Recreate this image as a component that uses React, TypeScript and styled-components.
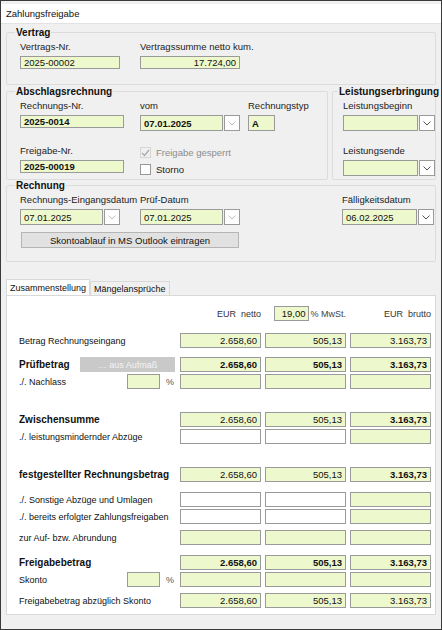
import styled, { createGlobalStyle } from 'styled-components';

const Global = createGlobalStyle`
  body { margin: 0; font-family: 'Liberation Sans', Arial, sans-serif; font-size: 9.5px; color: #111; }
`;

const Win = styled.div`
  width: 442px;
  height: 630px;
  box-sizing: border-box;
  border: 1px solid #3a3a3a;
  background: #f0f0f0;
  display: flex;
  flex-direction: column;
  overflow: hidden;
`;

const TitleBar = styled.div`
  height: 19px;
  margin-top: 3px;
  background: #fff;
  border-bottom: 1px solid #e2e2e2;
  padding-left: 5px;
  display: flex;
  align-items: center;
  font-size: 9.5px;
`;

const Group = styled.fieldset<{ $w?: number; $h: number }>`
  margin: 0;
  padding: 3px 0 0 13px;
  width: ${(p) => (p.$w ? `${p.$w}px` : 'auto')};
  height: ${(p) => p.$h}px;
  box-sizing: border-box;
  border: 1px solid #dcdcdc;
  border-radius: 2px;
  min-width: 0;
`;

const Legend = styled.legend`
  font-weight: bold;
  font-size: 10px;
  padding: 0 1px;
  margin-left: -5px;
  white-space: nowrap;
`;

const GroupRow = styled.div<{ $top?: number }>`
  display: flex;
  gap: 4px;
  margin: 0 5px;
  margin-top: ${(p) => p.$top ?? 0}px;
`;

const FieldRow = styled.div<{ $top?: number }>`
  display: flex;
  align-items: flex-start;
  margin-top: ${(p) => p.$top ?? 0}px;
`;

const Field = styled.div<{ $w: number; $mr?: number }>`
  width: ${(p) => p.$w}px;
  margin-right: ${(p) => p.$mr ?? 0}px;
  display: flex;
  flex-direction: column;
  gap: 3px;
`;

const Label = styled.span`
  font-size: 9.5px;
  color: #222;
  white-space: nowrap;
  height: 12px;
`;

const Input = styled.div<{ $bold?: boolean; $right?: boolean; $white?: boolean; $w?: number }>`
  height: 16px;
  ${(p) => (p.$w ? `width: ${p.$w}px;` : 'flex: 1;')}
  box-sizing: border-box;
  border: 1px solid #9a9a9a;
  background: ${(p) => (p.$white ? '#fff' : '#edf8cd')};
  font-weight: ${(p) => (p.$bold ? 'bold' : 'normal')};
  display: flex;
  align-items: center;
  justify-content: ${(p) => (p.$right ? 'flex-end' : 'flex-start')};
  padding: 0 3px;
  font-size: 9.5px;
  white-space: nowrap;
`;

const Combo = styled.div`
  display: flex;
  gap: 1px;
`;

const Drop = styled.div<{ $dim?: boolean }>`
  width: 16px;
  height: 16px;
  box-sizing: border-box;
  border: 1px solid #9a9a9a;
  background: #fff;
  display: flex;
  align-items: center;
  justify-content: center;
  color: ${(p) => (p.$dim ? '#bbb' : '#555')};
`;

const Chevron = () => (
  <svg width="8" height="5" viewBox="0 0 8 5">
    <path d="M0.5 0.5 L4 4 L7.5 0.5" fill="none" stroke="currentColor" strokeWidth="1" />
  </svg>
);

const DateBox = ({ value, dim, bold }: { value: string; dim?: boolean; bold?: boolean }) => (
  <Combo>
    <Input $bold={bold}>{value}</Input>
    <Drop $dim={dim}>
      <Chevron />
    </Drop>
  </Combo>
);

const Checks = styled.div`
  display: flex;
  flex-direction: column;
  gap: 2px;
  margin-top: 0px;
`;

const Check = styled.div<{ $dim?: boolean }>`
  display: flex;
  align-items: center;
  gap: 5px;
  height: 15px;
  color: ${(p) => (p.$dim ? '#8c8c8c' : '#222')};
`;

const Box = styled.div<{ $dim?: boolean }>`
  width: 11px;
  height: 11px;
  box-sizing: border-box;
  border: 1px solid ${(p) => (p.$dim ? '#d6d6d6' : '#999')};
  background: ${(p) => (p.$dim ? '#f0f0f0' : '#fff')};
  display: flex;
  align-items: center;
  justify-content: center;
`;

const Button = styled.div`
  margin-top: 7px;
  width: 218px;
  height: 16px;
  box-sizing: border-box;
  border: 1px solid #b5b5b5;
  background: #e1e1e1;
  display: flex;
  align-items: center;
  justify-content: center;
  margin-left: 1px;
`;

const Tabs = styled.div`
  display: flex;
  margin: 17px 5px 0;
`;

const Tab = styled.div<{ $on?: boolean }>`
  padding: 0 3px;
  height: ${(p) => (p.$on ? 15 : 13)}px;
  margin-top: ${(p) => (p.$on ? 0 : 2)}px;
  display: flex;
  align-items: center;
  background: ${(p) => (p.$on ? '#fff' : '#f0f0f0')};
  border: 1px solid #d9d9d9;
  border-bottom: none;
  font-size: 9px;
`;

const Panel = styled.div`
  margin: 0 5px;
  height: 320px;
  background: #fff;
  border: 1px solid #d9d9d9;
  padding: 10px 0 0 12px;
  box-sizing: border-box;
`;

const Row = styled.div<{ $top?: number }>`
  display: grid;
  grid-template-columns: 157px 81px 81px 81px;
  column-gap: 4px;
  height: 15px;
  align-items: center;
  margin-top: ${(p) => p.$top ?? 2}px;
`;

const RowLabel = styled.div<{ $bold?: boolean }>`
  display: flex;
  align-items: center;
  gap: 6px;
  font-weight: ${(p) => (p.$bold ? 'bold' : 'normal')};
  font-size: ${(p) => (p.$bold ? 10 : 9)}px;
  white-space: nowrap;
  height: 15px;
`;

const Cell = styled(Input)`
  height: 15px;
`;

const Head = styled.div`
  text-align: right;
  color: #333;
  white-space: nowrap;
  font-size: 9px;
`;

const GrayBtn = styled.div`
  margin-left: auto;
  width: 95px;
  height: 15px;
  background: #c9c9c9;
  color: #f4f4f4;
  font-weight: normal;
  font-size: 9px;
  display: flex;
  align-items: center;
  justify-content: center;
  margin-right: 1px;
`;

const SmallIn = styled(Input)`
  margin-left: auto;
  height: 15px;
`;

const Pct = styled.span`
  color: #555;
  width: 10px;
`;

type C = { v?: string; w?: boolean; b?: boolean };

const Cells = ({ cells }: { cells: C[] }) => (
  <>
    {cells.map((c, i) => (
      <Cell key={i} $right $white={c.w} $bold={c.b}>
        {c.v ?? ''}
      </Cell>
    ))}
  </>
);

const vals = (b1: boolean, b2: boolean, b3: boolean): C[] => [
  { v: '2.658,60', b: b1 },
  { v: '505,13', b: b2 },
  { v: '3.163,73', b: b3 },
];

const App = () => (
  <Win>
    <Global />
    <TitleBar>Zahlungsfreigabe</TitleBar>
    <GroupRow $top={3}>
      <Group $h={58} style={{ flex: 1 }}>
        <Legend>Vertrag</Legend>
        <FieldRow>
          <Field $w={100} $mr={20}>
            <Label>Vertrags-Nr.</Label>
            <Input>2025-00002</Input>
          </Field>
          <Field $w={100}>
            <Label>Vertragssumme netto kum.</Label>
            <Input $right>17.724,00</Input>
          </Field>
        </FieldRow>
      </Group>
    </GroupRow>
    <GroupRow $top={1}>
      <Group $w={322} $h={94}>
        <Legend>Abschlagsrechnung</Legend>
        <FieldRow>
          <Field $w={104} $mr={16}>
            <Label>Rechnungs-Nr.</Label>
            <Input $bold>2025-0014</Input>
          </Field>
          <Field $w={100} $mr={8}>
            <Label>vom</Label>
            <DateBox value="07.01.2025" bold dim />
          </Field>
          <Field $w={60}>
            <Label>Rechnungstyp</Label>
            <Input $bold $w={27}>A</Input>
          </Field>
        </FieldRow>
        <FieldRow $top={14}>
          <Field $w={104} $mr={16}>
            <Label>Freigabe-Nr.</Label>
            <Input $bold>2025-00019</Input>
          </Field>
          <Checks>
            <Check $dim>
              <Box $dim>
                <svg width="9" height="8" viewBox="0 0 9 8">
                  <path d="M1 4 L3.5 6.5 L8 1" fill="none" stroke="#aaa" strokeWidth="1.3" />
                </svg>
              </Box>
              Freigabe gesperrt
            </Check>
            <Check>
              <Box />
              Storno
            </Check>
          </Checks>
        </FieldRow>
      </Group>
      <Group $h={94} style={{ flex: 1, paddingLeft: 10 }}>
        <Legend>Leistungserbringung</Legend>
        <Field $w={92}>
          <Label>Leistungsbeginn</Label>
          <DateBox value="" />
        </Field>
        <Field $w={92} style={{ marginTop: 14 }}>
          <Label>Leistungsende</Label>
          <DateBox value="" />
        </Field>
      </Group>
    </GroupRow>
    <GroupRow>
      <Group $h={82} style={{ flex: 1 }}>
        <Legend>Rechnung</Legend>
        <FieldRow>
          <Field $w={100} $mr={20}>
            <Label>Rechnungs-Eingangsdatum</Label>
            <DateBox value="07.01.2025" dim />
          </Field>
          <Field $w={100} $mr={102}>
            <Label>Prüf-Datum</Label>
            <DateBox value="07.01.2025" dim />
          </Field>
          <Field $w={92}>
            <Label>Fälligkeitsdatum</Label>
            <DateBox value="06.02.2025" />
          </Field>
        </FieldRow>
        <Button>Skontoablauf in MS Outlook eintragen</Button>
      </Group>
    </GroupRow>
    <Tabs>
      <Tab $on>Zusammenstellung</Tab>
      <Tab>Mängelansprüche</Tab>
    </Tabs>
    <Panel>
      <Row $top={0}>
        <span />
        <Head>EUR&nbsp;&nbsp;netto</Head>
        <RowLabel style={{ gap: 1, paddingLeft: 9 }}>
          <Input $right $w={38} style={{ height: 15 }}>19,00</Input>
          <span style={{ color: '#444' }}>% MwSt.</span>
        </RowLabel>
        <Head>EUR&nbsp;&nbsp;brutto</Head>
      </Row>
      <Row $top={12}>
        <RowLabel>Betrag Rechnungseingang</RowLabel>
        <Cells cells={vals(false, false, false)} />
      </Row>
      <Row $top={9}>
        <RowLabel $bold>
          Prüfbetrag<GrayBtn>… aus Aufmaß</GrayBtn>
        </RowLabel>
        <Cells cells={vals(true, true, true)} />
      </Row>
      <Row>
        <RowLabel>
          ./. Nachlass<SmallIn $w={33} />
          <Pct>%</Pct>
        </RowLabel>
        <Cells cells={[{}, {}, {}]} />
      </Row>
      <Row $top={23}>
        <RowLabel $bold>Zwischensumme</RowLabel>
        <Cells cells={vals(false, false, true)} />
      </Row>
      <Row>
        <RowLabel>./. leistungsmindernder Abzüge</RowLabel>
        <Cells cells={[{ w: true }, { w: true }, {}]} />
      </Row>
      <Row $top={23}>
        <RowLabel $bold>festgestellter Rechnungsbetrag</RowLabel>
        <Cells cells={vals(false, false, true)} />
      </Row>
      <Row $top={10}>
        <RowLabel>./. Sonstige Abzüge und Umlagen</RowLabel>
        <Cells cells={[{ w: true }, { w: true }, {}]} />
      </Row>
      <Row>
        <RowLabel>./. bereits erfolgter Zahlungsfreigaben</RowLabel>
        <Cells cells={[{ w: true }, { w: true }, {}]} />
      </Row>
      <Row $top={6}>
        <RowLabel>zur Auf- bzw. Abrundung</RowLabel>
        <Cells cells={[{}, {}, {}]} />
      </Row>
      <Row $top={10}>
        <RowLabel $bold>Freigabebetrag</RowLabel>
        <Cells cells={vals(true, true, true)} />
      </Row>
      <Row>
        <RowLabel>
          Skonto<SmallIn $w={33} />
          <Pct>%</Pct>
        </RowLabel>
        <Cells cells={[{}, {}, {}]} />
      </Row>
      <Row $top={6}>
        <RowLabel>Freigabebetrag abzüglich Skonto</RowLabel>
        <Cells cells={vals(false, false, false)} />
      </Row>
    </Panel>
  </Win>
);

export default App;
